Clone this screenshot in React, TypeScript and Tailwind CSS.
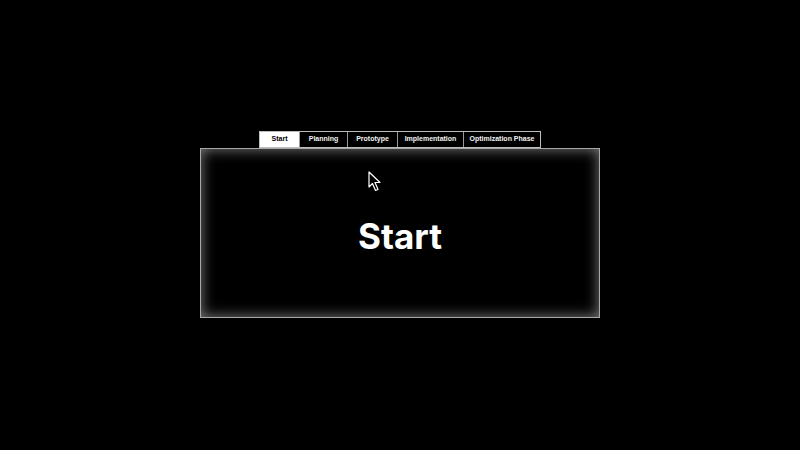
const tabs = [
  { label: 'Start', width: 'w-[39px]' },
  { label: 'Planning', width: 'w-[48px]' },
  { label: 'Prototype', width: 'w-[50px]' },
  { label: 'Implementation', width: 'w-[66px]' },
  { label: 'Optimization Phase', width: 'w-[77px]' },
];

function Cursor() {
  return (
    <svg className="absolute left-[167px] top-[22px]" width="16" height="22" viewBox="0 0 16 22">
      <path
        d="M1 1 L1 16 L4.5 12.5 L7.5 19.5 L10 18.5 L7 11.5 L12 11.5 Z"
        fill="#000"
        stroke="#fff"
        strokeWidth="1.2"
        strokeLinejoin="round"
      />
    </svg>
  );
}

export default function App() {
  const active = 'Start';
  return (
    <div className="w-[800px] h-[450px] bg-black flex flex-col items-center pt-[131px] font-['Liberation_Sans',Arial,sans-serif]">
      {/* tab bar */}
      <div className="flex h-[17px] border border-[#bdbdbd]">
        {tabs.map((tab, i) => (
          <div
            key={tab.label}
            className={`${tab.width} flex items-center justify-center text-[7px] font-bold ${
              i > 0 ? 'border-l border-[#9a9a9a]' : ''
            } ${tab.label === active ? 'bg-white text-black' : 'bg-black text-[#f2f2f2]'}`}>
            {tab.label}
          </div>
        ))}
      </div>

      {/* panel */}
      <div className="relative w-[400px] h-[170px] bg-black border border-[#a8a8a8] shadow-[inset_0_0_14px_rgba(255,255,255,0.5)] flex items-center justify-center">
        <span className="text-white text-[35px] font-bold font-['Inter','Open_Sans',sans-serif] mt-[6px]">
          Start
        </span>
        <Cursor />
      </div>
    </div>
  );
}
